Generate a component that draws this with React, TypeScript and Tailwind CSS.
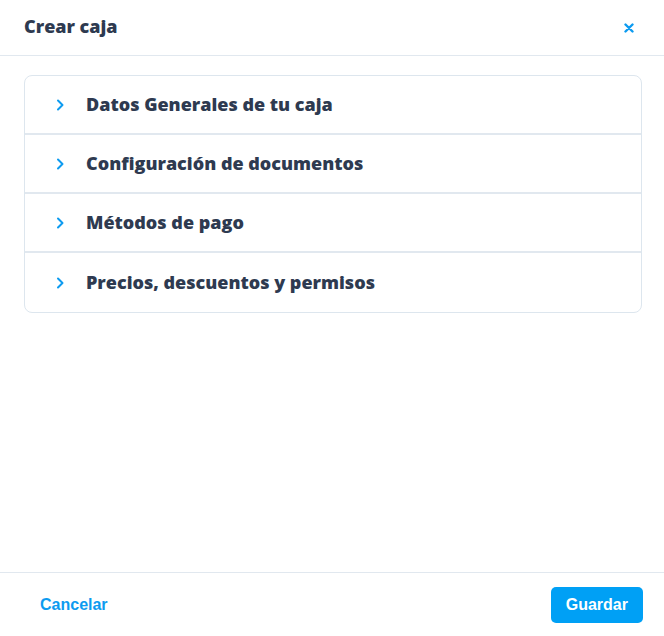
const sections = [
  'Datos Generales de tu caja',
  'Configuración de documentos',
  'Métodos de pago',
  'Precios, descuentos y permisos',
]

function Chevron() {
  return (
    <svg width="8" height="12" viewBox="0 0 8 12" fill="none" className="shrink-0">
      <path d="M2 1.5 L6.5 6 L2 10.5" stroke="#0d9bf0" strokeWidth="2" strokeLinecap="round" strokeLinejoin="round" />
    </svg>
  )
}

export default function App() {
  return (
    <div className="w-[664px] h-[636px] bg-white flex flex-col font-['Open_Sans',sans-serif] text-[#2e3a50]">
      <header className="h-[56px] shrink-0 flex items-center justify-between pl-6 pr-[30px] border-b border-[#e1e8ef]">
        <h1 className="text-[18px] font-extrabold -mt-0.5">Crear caja</h1>
        <button className="text-[#0d9bf0]">
          <svg width="10" height="10" viewBox="0 0 10 10">
            <path d="M1.5 1.5 L8.5 8.5 M8.5 1.5 L1.5 8.5" stroke="#0d9bf0" strokeWidth="2.4" strokeLinecap="round" />
          </svg>
        </button>
      </header>

      <main className="flex-1 pl-6 pr-[22px] pt-[19px]">
        <div className="border border-[#dde6ee] rounded-lg divide-y-2 divide-[#e1e8ef]">
          {sections.map((s) => (
            <div key={s} className="h-[59px] flex items-center pl-[31px] gap-[22px]">
              <Chevron />
              <span className="text-[18px] font-extrabold">{s}</span>
            </div>
          ))}
        </div>
      </main>

      <footer className="h-[64px] shrink-0 border-t border-[#e1e8ef] flex items-center justify-between pl-10 pr-[21px] font-['Liberation_Sans',sans-serif]">
        <button className="text-[16px] font-bold text-[#0d9bf0]">Cancelar</button>
        <button className="h-[36px] px-[15px] rounded-[5px] bg-[#00a0f5] text-white text-[16px] font-bold">Guardar</button>
      </footer>
    </div>
  )
}
